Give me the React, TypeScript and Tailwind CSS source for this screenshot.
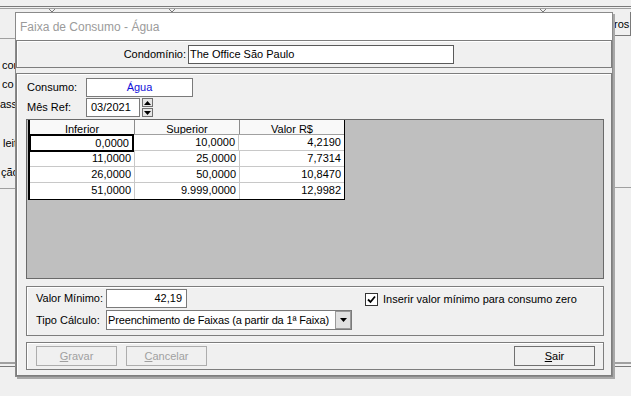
import React from 'react';

const rows = [
  ['0,0000', '10,0000', '4,2190'],
  ['11,0000', '25,0000', '7,7314'],
  ['26,0000', '50,0000', '10,8470'],
  ['51,0000', '9.999,0000', '12,9982'],
];

const Panel: React.FC<{ className?: string; children?: React.ReactNode }> = ({ className = '', children }) => (
  <div className={`border border-[#7d7d7d] shadow-[inset_1px_1px_0_#ffffff] ${className}`}>{children}</div>
);

const Spinner: React.FC = () => (
  <div className="flex flex-col w-[11px] h-[19px] gap-px">
    <div className="flex-1 border border-[#707070] bg-[#e6e6e6] flex items-center justify-center">
      <svg width="7" height="4" viewBox="0 0 7 4"><path d="M3.5 0 L7 4 L0 4 Z" fill="#000" /></svg>
    </div>
    <div className="flex-1 border border-[#707070] bg-[#e6e6e6] flex items-center justify-center">
      <svg width="7" height="4" viewBox="0 0 7 4"><path d="M0 0 L7 0 L3.5 4 Z" fill="#000" /></svg>
    </div>
  </div>
);

const Btn: React.FC<{ u: string; rest: string; disabled?: boolean; className?: string }> = ({ u, rest, disabled, className = '' }) => (
  <div
    className={`w-[81px] h-[20px] border flex items-center justify-center ${
      disabled ? 'border-[#adadad] text-[#a0a0a0]' : 'border-[#707070] text-black'
    } ${className}`}
  >
    <span>
      <span className="underline underline-offset-1">{u}</span>
      {rest}
    </span>
  </div>
);

const App: React.FC = () => (
  <div className="relative w-[631px] h-[396px] overflow-hidden bg-[#f0f0f0] font-['Liberation_Sans',Arial,sans-serif] text-[11px] text-black">
    {/* background window */}
    <div className="flex flex-col h-full">
      <svg width="631" height="12" className="block shrink-0">
        <line x1="0" y1="6.5" x2="631" y2="6.5" stroke="#7a7a7a" />
        <line x1="0" y1="8.5" x2="631" y2="8.5" stroke="#a0a0a0" />
        <path d="M49 9 L52 12 L55 9" fill="none" stroke="#7a7a7a" />
        <path d="M169 9 L172 12 L175 9" fill="none" stroke="#7a7a7a" />
        <path d="M540 9 L543 12 L546 9" fill="none" stroke="#7a7a7a" />
      </svg>
      <div className="flex flex-1">
        <div className="w-[16px] flex flex-col overflow-hidden whitespace-nowrap">
          <div className="h-[27px] border-b border-[#a0a0a0] shrink-0" />
          <div className="mt-[19px] h-[14px] leading-[14px] pl-[2px]">cor</div>
          <div className="mt-[5px] h-[14px] leading-[14px] pl-[2px]">co</div>
          <div className="mt-[6px] h-[14px] leading-[14px]">ass</div>
          <div className="mt-[25px] h-[14px] leading-[14px] pl-[3px]">leit</div>
          <div className="mt-[15px] h-[14px] leading-[14px] pl-px">ção</div>
          <div className="mt-[9px] border-b border-[#a0a0a0]" />
          <div className="flex-1" />
          <div className="h-[2px] bg-[#a0a0a0] mb-[2px]" />
          <div className="h-px bg-[#7a7a7a] mb-[29px]" />
        </div>
        <div className="flex-1" />
        <div className="w-[19px] flex flex-col whitespace-nowrap">
          <div className="h-[24px] border-r border-b border-[#7a7a7a] leading-[24px] pl-[2px]">ros</div>
          <div className="h-[152px] border-b border-[#a0a0a0]" />
          <div className="flex-1" />
          <div className="h-[2px] bg-[#a0a0a0] mb-[2px]" />
          <div className="h-px bg-[#7a7a7a] mb-[29px]" />
        </div>
      </div>
    </div>

    {/* dialog */}
    <div className="absolute left-[15px] top-[12px] w-[598px] h-[365px] border border-[#8a8a8a] bg-[#f0f0f0] shadow-[2px_2px_0_#a8a8a8] flex flex-col">
      <div className="h-[27px] bg-white flex items-center pl-[4px] text-[12px] text-[#9b9b9b]">
        Faixa de Consumo - Água
      </div>

      <Panel className="h-[28px] flex items-center">
        <div className="w-[171px] text-right pr-[2px] pt-[1px]">Condomínio:</div>
        <div className="w-[266px] h-[19px] border border-[#5a5a5a] bg-white flex items-center pl-[1px]">
          The Office São Paulo
        </div>
      </Panel>

      <Panel className="mt-[5px] flex-1 flex flex-col pl-[9px] pr-[7px] pt-[4px]">
        <div className="flex items-center h-[19px]">
          <div className="w-[60px] pl-px">Consumo:</div>
          <div className="w-[107px] h-[19px] border border-[#7a7a7a] bg-white flex items-center justify-center text-[#1010d8]">
            Água
          </div>
        </div>
        <div className="flex items-center h-[19px] mt-px">
          <div className="w-[60px] pl-px">Mês Ref:</div>
          <div className="w-[54px] h-[19px] border border-[#7a7a7a] bg-white flex items-center pl-[4px]">03/2021</div>
          <div className="ml-[2px]">
            <Spinner />
          </div>
        </div>

        <div className="mt-[2px] h-[160px] border border-[#6a6a6a] bg-[#bfbfbf] pl-px">
          <div className="w-[317px] border-l-2 border-r border-b border-black bg-white">
            <div className="flex h-[15px] bg-[#f9f9f9] border-b border-[#a0a0a0] overflow-hidden leading-[19px] text-center">
              <div className="w-[105px] border-r border-[#8c8c8c]">Inferior</div>
              <div className="w-[105px] border-r border-[#8c8c8c]">Superior</div>
              <div className="flex-1">Valor R$</div>
            </div>
            {rows.map((r, i) => (
              <div key={i} className={`flex h-[16px] ${i < rows.length - 1 ? 'border-b border-[#c8c8c8]' : ''}`}>
                {r.map((c, j) => (
                  <div
                    key={j}
                    className={`text-right pr-[3px] leading-[15px] ${j === 2 ? 'flex-1' : 'w-[105px]'} ${
                      i === 0 && j === 0
                        ? 'border-2 border-black -ml-px -mt-px h-[18px] leading-[14px] pr-[2px]'
                        : j < 2
                        ? 'border-r border-[#c8c8c8]'
                        : ''
                    }`}
                  >
                    {c}
                  </div>
                ))}
              </div>
            ))}
          </div>
        </div>

        <Panel className="mt-[7px] h-[50px] flex pl-[9px] pt-[2px]">
          <div className="w-[316px] flex flex-col gap-[2px]">
            <div className="flex items-center h-[19px]">
              <div className="w-[70px]">Valor Mínimo:</div>
              <div className="w-[81px] h-[19px] border border-[#7a7a7a] bg-white flex items-center justify-end pr-[4px]">42,19</div>
            </div>
            <div className="flex items-center h-[20px]">
              <div className="w-[70px]">Tipo Cálculo:</div>
              <div className="w-[246px] h-[20px] border border-[#7a7a7a] bg-white flex items-center">
                <div className="flex-1 pl-px whitespace-nowrap overflow-hidden tracking-[-0.15px]">Preenchimento de Faixas (a partir da 1ª Faixa)</div>
                <div className="w-[16px] h-[18px] bg-[#e1e1e1] border border-[#9a9a9a] flex items-center justify-center">
                  <svg width="7" height="4" viewBox="0 0 7 4"><path d="M0 0 L7 0 L3.5 4 Z" fill="#000" /></svg>
                </div>
              </div>
            </div>
          </div>
          <div className="ml-[13px] mt-[4px] flex items-start gap-[5px]">
            <div className="w-[13px] h-[13px] border border-[#333] bg-white flex items-center justify-center">
              <svg width="9" height="9" viewBox="0 0 9 9">
                <path d="M1 4.5 L3.5 7 L8 1.5" fill="none" stroke="#000" strokeWidth="1.8" />
              </svg>
            </div>
            <div className="leading-[13px]">Inserir valor mínimo para consumo zero</div>
          </div>
        </Panel>

        <Panel className="mt-[6px] h-[28px] flex items-center pl-[9px] pr-[8px]">
          <Btn u="G" rest="ravar" disabled />
          <Btn u="C" rest="ancelar" disabled className="ml-[9px]" />
          <div className="flex-1" />
          <Btn u="S" rest="air" />
        </Panel>
      </Panel>
    </div>
  </div>
);

export default App;
